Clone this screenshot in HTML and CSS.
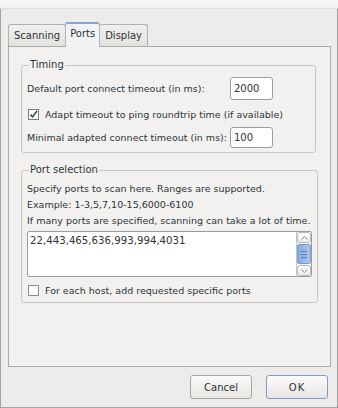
FILE: index.html
```html
<!DOCTYPE html>
<html lang="en">
<head>
  <meta charset="UTF-8">
  <title>Preferences</title>
  <link rel="stylesheet" href="styles.css">
</head>
<body>
  <div class="window">
    <div class="titlebar-edge"></div>

    <!-- Tabs -->
    <div class="tabs">
      <div class="tab">Scanning</div>
      <div class="tab active">Ports</div>
      <div class="tab">Display</div>
    </div>

    <!-- Ports page -->
    <div class="panel">
      <fieldset class="group timing">
        <legend>Timing</legend>
        <div class="grid">
          <span class="label first">Default port connect timeout (in ms):</span>
          <div class="input first">2000</div>
          <div class="check wide">
            <span class="box checked">
              <svg width="9" height="9" viewBox="0 0 9 9"><path d="M1.5 4.5 L3.5 7 L8 1" fill="none" stroke="#2e3436" stroke-width="1.3"/></svg>
            </span>
            <span>Adapt timeout to ping roundtrip time (if available)</span>
          </div>
          <span class="label">Minimal adapted connect timeout (in ms):</span>
          <div class="input short">100</div>
        </div>
      </fieldset>

      <fieldset class="group ports">
        <legend>Port selection</legend>
        <div class="hint">
          <div>Specify ports to scan here. Ranges are supported.</div>
          <div>Example: 1-3,5,7,10-15,6000-6100</div>
          <div>If many ports are specified, scanning can take a lot of time.</div>
        </div>
        <div class="textarea">
          <div class="text">22,443,465,636,993,994,4031</div>
          <div class="scrollbar">
            <div class="arrow up">
              <svg width="7" height="4" viewBox="0 0 7 4"><path d="M0.5 3.5 L3.5 0.5 L6.5 3.5" fill="none" stroke="#8a8a8a" stroke-width="1"/></svg>
            </div>
            <div class="thumb"><span></span><span></span><span></span></div>
            <div class="arrow down">
              <svg width="7" height="4" viewBox="0 0 7 4"><path d="M0.5 0.5 L3.5 3.5 L6.5 0.5" fill="none" stroke="#8a8a8a" stroke-width="1"/></svg>
            </div>
          </div>
        </div>
        <div class="check bottom">
          <span class="box"></span>
          <span>For each host, add requested specific ports</span>
        </div>
      </fieldset>
    </div>

    <!-- Buttons -->
    <div class="buttons">
      <button class="btn">Cancel</button>
      <button class="btn default">OK</button>
    </div>
  </div>
</body>
</html>
```

FILE: styles.css
```css
/* General styles */
body {
  margin: 0;
  background-color: #edeceb;
  font-family: 'DejaVu Sans', sans-serif;
  font-size: 9.5px;
  color: #2e3436;
}

.window {
  width: 338px;
  height: 408px;
  box-sizing: border-box;
  border-left: 1px solid #a3a3a3;
  border-right: 1px solid #a3a3a3;
  border-bottom: 1px solid #a3a3a3;
  background-color: #edeceb;
}

.titlebar-edge {
  height: 8px;
  margin: 0 -1px;
  background: linear-gradient(#f7f7f6, #f1f0ef);
  border-bottom: 1px solid #dedcd9;
}

/* Tabs */
.tabs {
  display: flex;
  align-items: flex-end;
  margin-top: 12px;
  padding-left: 7px;
  height: 25px;
}

.tab {
  height: 21px;
  line-height: 22px;
  padding: 0 5px;
  font-size: 10px;
  background: linear-gradient(#f0efee, #e4e2df);
  border: 1px solid #b3b0ac;
  border-bottom: none;
  border-radius: 3px 3px 0 0;
  margin-right: -1px;
}

.tab.active {
  position: relative;
  height: 23px;
  line-height: 20px;
  background: #f3f3f5;
  border-color: #a9b6c8;
  border-top: 2px solid #86a5d5;
  margin-bottom: -1px;
  z-index: 1;
  padding: 0 4px;
}

/* Page */
.panel {
  margin-left: 7px;
  width: 323px;
  height: 321px;
  box-sizing: border-box;
  background-color: #f2f1f0;
  border: 1px solid #ababab;
  padding: 12px 13px 0 12px;
}

.group {
  margin: 0;
  padding: 0 5px 4px 5px;
  border: 1px solid #cac7c3;
  border-radius: 3px;
  width: 295px;
  box-sizing: border-box;
}

.group legend {
  padding: 0 1px;
  margin-left: 2px;
  line-height: 12px;
  font-size: 10px;
}

.grid {
  display: grid;
  grid-template-columns: max-content 43px;
  justify-content: start;
  align-items: center;
  column-gap: 3px;
  margin-top: 6px;
}

.check {
  display: flex;
  align-items: center;
  height: 22px;
  padding-left: 1px;
  white-space: nowrap;
}

/* the checkbox row must not widen the label column */
.check.wide {
  grid-column: 1 / -1;
  contain: inline-size;
  margin: 3px 0 2px 0;
}

.input {
  height: 21px;
  box-sizing: border-box;
  background: #fff;
  border: 1px solid #9c9c9c;
  border-radius: 3px;
  padding-left: 3px;
  line-height: 19px;
  font-size: 10px;
}

.input.first {
  height: 23px;
  line-height: 21px;
}

.box {
  width: 9px;
  height: 9px;
  flex-shrink: 0;
  border: 1px solid #8c8c8c;
  background: #fbfbfb;
  margin-right: 6px;
  display: flex;
}

.box.checked {
  border-color: #7a7a7a;
}

/* Port selection */
.ports {
  margin-top: 11px;
  padding-bottom: 1px;
}

.hint {
  margin-top: 5px;
  line-height: 16px;
}

.textarea {
  display: flex;
  margin-top: 2px;
  height: 46px;
  width: 285px;
  box-sizing: border-box;
  background: #fff;
  border: 1px solid #9c9c9c;
  border-radius: 2px;
}

.textarea .text {
  flex: 1;
  padding: 3px 0 0 2px;
  font-size: 10.2px;
}

.scrollbar {
  width: 14px;
  display: flex;
  flex-direction: column;
  border-left: 1px solid #c9c9c9;
  background: #f6f6f6;
}

.arrow {
  height: 9px;
  display: flex;
  align-items: center;
  justify-content: center;
  border: 1px solid #b8b8b8;
  border-radius: 3px;
  background: linear-gradient(#ffffff, #ececec);
}

.thumb {
  flex: 1;
  margin: 1px 0;
  background: linear-gradient(90deg, #88ace0, #a9c5ec);
  border: 1px solid #7d9dd0;
  border-radius: 2px;
  display: flex;
  flex-direction: column;
  align-items: center;
  justify-content: center;
  gap: 2px;
}

.thumb span {
  width: 6px;
  height: 1px;
  background: #5a7fb8;
}

.check.bottom {
  margin-top: 2px;
}

/* Buttons */
.buttons {
  display: flex;
  justify-content: flex-end;
  gap: 14px;
  margin-top: 8px;
  padding-right: 9px;
}

.btn {
  width: 62px;
  height: 24px;
  font-family: 'DejaVu Sans', sans-serif;
  font-size: 10px;
  color: #2e3436;
  background: linear-gradient(#fbfbfa, #e7e5e2);
  border: 1px solid #a8a6a3;
  border-radius: 3px;
  padding: 0;
}

.btn.default {
  border-color: #7f9cc8;
  letter-spacing: 1px;
}
```
